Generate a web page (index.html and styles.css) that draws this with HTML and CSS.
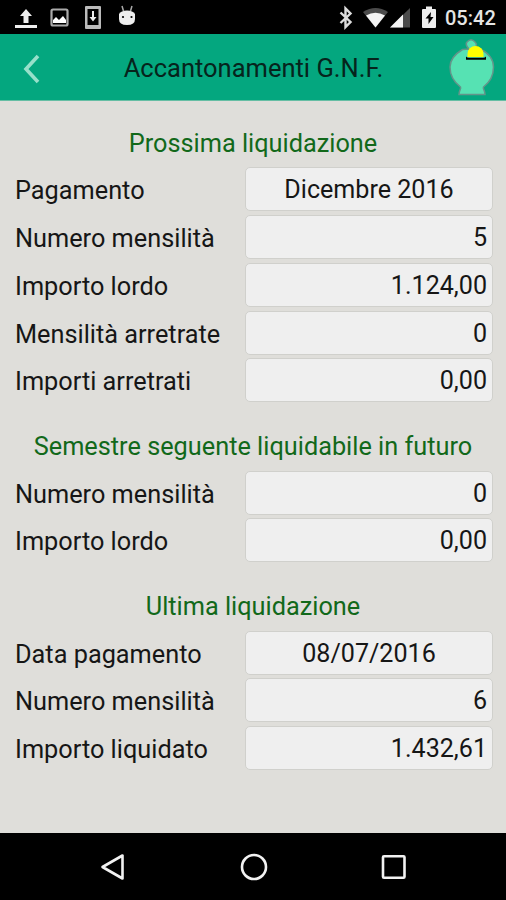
FILE: index.html
```html
<!DOCTYPE html>
<html lang="it">
<head>
<meta charset="utf-8">
<title>Accantonamenti G.N.F.</title>
<link rel="stylesheet" href="styles.css">
</head>
<body>
<div class="status">
  <svg class="status-icons" width="160" height="34" viewBox="0 0 160 34">
    <path fill="#eee" d="M26 9l6 7h-3.500v7h-5v-7H20zM15 25h22v3H15z"/>
    <rect x="51.500" y="9.500" width="16" height="16" rx="1.500" fill="none" stroke="#aaa" stroke-width="2.200"/>
    <path fill="#fff" d="M53 23v-3l3-3 3 3 4-4 3 4v3z"/>
    <path fill="#bbb" fill-rule="evenodd" d="M86 6h14q1 0 1 1v21q0 1-1 1H86q-1 0-1-1V7q0-1 1-1zM87.500 9v16h11V9z"/>
    <path fill="#eee" d="M92 11h2v6h2.500L93 21.500 89.500 17H92z"/>
    <path fill="#eee" d="M119 14q2-3.500 8-3.500t8 3.500v5q0 6-8 6t-8-6z"/>
    <path d="M122 6l1.500 5M132 6l-1.500 5" stroke="#aaa" stroke-width="1.500"/>
    <circle cx="123" cy="17" r="1.100"/><circle cx="131.500" cy="17" r="1.100"/>
  </svg>
  <div class="status-right">
    <svg width="104" height="34" viewBox="338 0 104 34">
      <path d="M340.500 12.500l10 9.500-5 5V8.500l5 5-10 9.500" fill="none" stroke="#ddd" stroke-width="2.400"/>
      <path fill="#4b4b4b" d="M363 12q12.500-8 25 0L375.500 27.500z"/>
      <path fill="#f4f4f4" d="M366 15.500q9.500-5.500 19 0L375.500 27.500z"/>
      <path fill="#4b4b4b" d="M410 8v19.500h-20z"/>
      <path fill="#f4f4f4" d="M403 14.500v13h-13z"/>
      <path fill="#eee" d="M426 6.500h6V9h3q1 0 1 1v17q0 1-1 1h-12q-1 0-1-1V10q0-1 1-1h3z"/>
      <path d="M431 12l-5.500 6.500h3V24l5-7h-3z"/>
    </svg>
    <span class="clock">05:42</span>
  </div>
</div>
<header class="bar">
  <svg class="back" width="48" height="66" viewBox="0 34 48 66"><path d="M38 56L26 69l12 13" fill="none" stroke="#97e0ca" stroke-width="3.600"/></svg>
  <h1>Accantonamenti G.N.F.</h1>
  <svg class="jar" width="58" height="66" viewBox="448 34 58 66">
    <path d="M469 49l-2-2.500q-1.500-3 0-4.500 4-4.500 8 0 3 3 0 6l6 1.500C489 53 493.500 60 493.500 67c0 9-4 15.500-10 20-1 2 1.500 3 1.500 7.500h-26c0-4.500 2.500-5.500 1.500-7.500-6-4.500-10.500-11-10.500-20 0-7 5-13 12.500-17.500z" fill="#56e2b3" stroke="#64958a" stroke-width="1.500"/>
    <path d="M467.500 57v-3a8 8 0 0 1 16 0v3z" fill="#ff0"/>
    <path d="M466 56.500q1 1.200 3 1.200h14q2 0 3-1.200v3.300h-20z"/>
  </svg>
</header>
<main>
  <section>
    <h2>Prossima liquidazione</h2>
    <div class="row"><label>Pagamento</label><output class="mid">Dicembre 2016</output></div>
    <div class="row"><label>Numero mensilità</label><output>5</output></div>
    <div class="row"><label>Importo lordo</label><output>1.124,00</output></div>
    <div class="row"><label>Mensilità arretrate</label><output>0</output></div>
    <div class="row"><label>Importi arretrati</label><output>0,00</output></div>
  </section>
  <section>
    <h2>Semestre seguente liquidabile in futuro</h2>
    <div class="row"><label>Numero mensilità</label><output>0</output></div>
    <div class="row"><label>Importo lordo</label><output>0,00</output></div>
  </section>
  <section>
    <h2>Ultima liquidazione</h2>
    <div class="row"><label>Data pagamento</label><output class="mid">08/07/2016</output></div>
    <div class="row"><label>Numero mensilità</label><output>6</output></div>
    <div class="row"><label>Importo liquidato</label><output>1.432,61</output></div>
  </section>
</main>
<nav>
  <svg width="26" height="30" viewBox="0 0 26 30"><path d="M22.500 3.500v23L2.500 15z" fill="none" stroke="#f2f2f2" stroke-width="2.600" stroke-linejoin="round"/></svg>
  <svg width="30" height="30" viewBox="0 0 30 30"><circle cx="15" cy="15" r="12" fill="none" stroke="#f2f2f2" stroke-width="2.600"/></svg>
  <svg width="26" height="30" viewBox="0 0 26 30"><rect x="2" y="4.200" width="21.500" height="21.500" rx="1" fill="none" stroke="#f2f2f2" stroke-width="2.600"/></svg>
</nav>
</body>
</html>
```
FILE: styles.css
```css
* { box-sizing: border-box; }
body {
  margin: 0;
  height: 900px;
  display: flex;
  flex-direction: column;
  background: #dfdeda;
  color: #161616;
  font: 25.3px/28px Roboto, sans-serif;
  overflow: hidden;
}
svg { display: block; flex: none; }
.status {
  height: 34px;
  display: flex;
  justify-content: space-between;
  background: #000;
}
.status-right { display: flex; padding-right: 10px; gap: 3px; }
.clock {
  width: 51px;
  color: #e4e4e4;
  font-size: 20px;
  font-weight: 500;
  line-height: 36px;
  white-space: nowrap;
}
.bar {
  height: 67px;
  display: grid;
  grid-template-columns: 48px 1fr 58px;
  align-items: center;
  background: #04a77f;
  border-bottom: 1px solid #66bea4;
}
h1, h2 { margin: 0; font-size: inherit; font-weight: 400; text-align: center; white-space: nowrap; }
h1 { color: #06241c; padding: 1px 0 0 11px; font-size: 25.5px; }
main { flex: 1; }
h2 {
  height: 64.4px;
  padding-top: 29px;
  color: #12691a;
}
.row {
  height: 47.8px;
  display: grid;
  grid-template-columns: 230px 248px;
  align-items: center;
  padding-left: 15px;
}
label { padding-top: 4px; white-space: nowrap; }
output {
  height: 44px;
  padding: 0 5px;
  border: 1px solid #d0d0cc;
  border-radius: 5px;
  background: #efefef;
  font-size: 25.1px;
  line-height: 43.4px;
  text-align: right;
}
.mid { text-align: center; }
nav {
  height: 67px;
  display: flex;
  align-items: center;
  justify-content: space-between;
  padding: 0 99px 0 100px;
  background: #000;
}
```
